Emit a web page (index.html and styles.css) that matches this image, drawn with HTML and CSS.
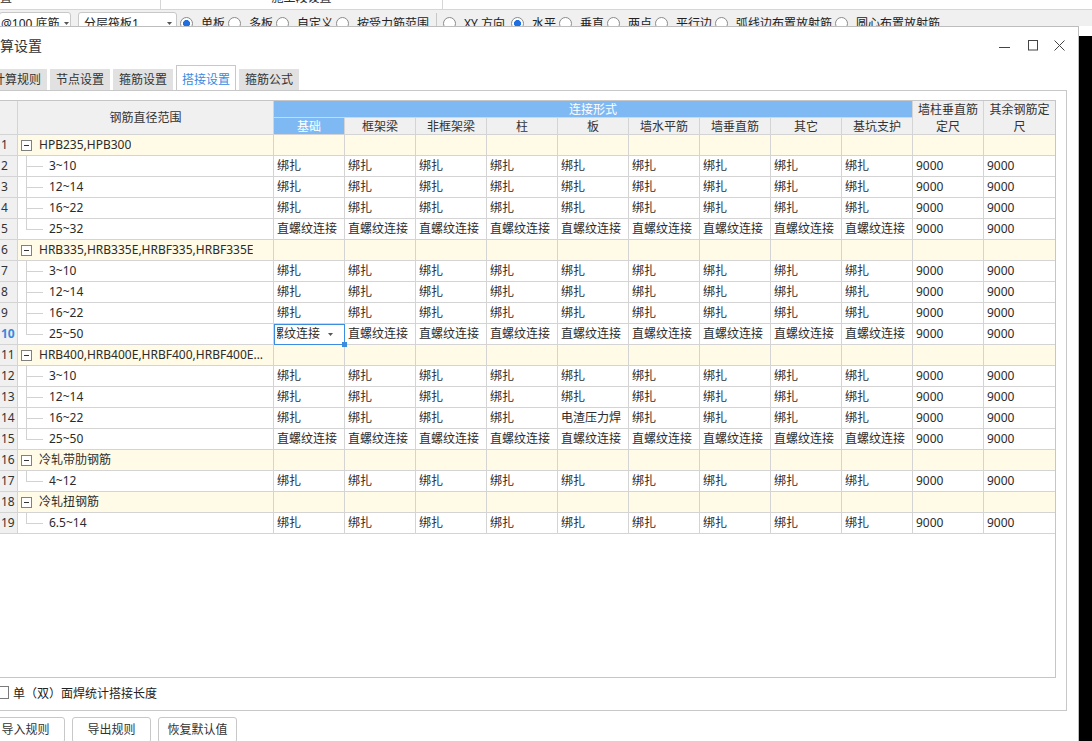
FILE: index.html
```html
<!DOCTYPE html>
<html lang="zh-CN">
<head>
<meta charset="utf-8">
<title>计算设置</title>
<link rel="stylesheet" href="styles.css">
</head>
<body>
<div class="topstrip">
  <div class="topcell tc1"><span class="cut">设置</span></div>
  <div class="topcell tc2"><span>施工段设置</span></div>
  <div class="topcell tc3"></div>
</div>
<div class="toolbar">
  <div class="tbrow">
    <div class="combo combo1"><span>@100 底筋</span><svg class="arr" width="5" height="3" viewBox="0 0 5 3"><path d="M0 0h5L2.5 3z" fill="#555"/></svg></div>
    <div class="combo combo2"><span>分层筏板1</span><svg class="arr" width="5" height="3" viewBox="0 0 5 3"><path d="M0 0h5L2.5 3z" fill="#555"/></svg></div>
    <span class="radio on first"></span><span class="lbl">单板</span>
    <span class="radio"></span><span class="lbl">多板</span>
    <span class="radio"></span><span class="lbl">自定义</span>
    <span class="radio"></span><span class="lbl">按受力筋范围</span>
    <span class="sep"></span>
    <span class="radio"></span><span class="lbl xy">XY 方向</span>
    <span class="radio on"></span><span class="lbl">水平</span>
    <span class="radio"></span><span class="lbl">垂直</span>
    <span class="radio"></span><span class="lbl">两点</span>
    <span class="radio"></span><span class="lbl">平行边</span>
    <span class="radio"></span><span class="lbl">弧线边布置放射筋</span>
    <span class="radio"></span><span class="lbl">圆心布置放射筋</span>
  </div>
</div>
<div class="desk">
  <div class="dialog">
    <div class="titlebar">
      <span class="title">计算设置</span>
      <div class="winctl">
        <svg class="wmin" width="11" height="11" viewBox="0 0 11 11"><path d="M0 7.5h11" stroke="#444" stroke-width="1"/></svg>
        <svg class="wmax" width="10" height="11" viewBox="0 0 10 11"><rect x="0.5" y="0.5" width="9" height="9.5" fill="none" stroke="#444"/></svg>
        <svg class="wclose" width="11" height="11" viewBox="0 0 11 11"><path d="M0.5 0.5l10 10M10.5 0.5l-10 10" stroke="#444" stroke-width="1"/></svg>
      </div>
    </div>
    <div class="tabs">
      <div class="tab">计算规则</div>
      <div class="tab">节点设置</div>
      <div class="tab">箍筋设置</div>
      <div class="tab active">搭接设置</div>
      <div class="tab">箍筋公式</div>
    </div>
    <div class="panel">
      <div class="grid">
        <div class="thead">
          <div class="h-rn"></div>
          <div class="h-range">钢筋直径范围</div>
          <div class="h-band">连接形式</div>
          <div class="h-tall">墙柱垂直筋定尺</div>
          <div class="h-tall last">其余钢筋定尺</div>
          <div class="h-sub on">基础</div>
          <div class="h-sub">框架梁</div>
          <div class="h-sub">非框架梁</div>
          <div class="h-sub">柱</div>
          <div class="h-sub">板</div>
          <div class="h-sub">墙水平筋</div>
          <div class="h-sub">墙垂直筋</div>
          <div class="h-sub">其它</div>
          <div class="h-sub">基坑支护</div>
        </div>

        <div class="row grp"><div class="rn">1</div><div class="gname"><span class="tog"></span><span class="gtext">HPB235,HPB300</span></div><div></div><div></div><div></div><div></div><div></div><div></div><div></div><div></div><div></div><div></div><div></div></div>
        <div class="row"><div class="rn">2</div><div class="ch">3~10</div><div>绑扎</div><div>绑扎</div><div>绑扎</div><div>绑扎</div><div>绑扎</div><div>绑扎</div><div>绑扎</div><div>绑扎</div><div>绑扎</div><div>9000</div><div>9000</div></div>
        <div class="row"><div class="rn">3</div><div class="ch">12~14</div><div>绑扎</div><div>绑扎</div><div>绑扎</div><div>绑扎</div><div>绑扎</div><div>绑扎</div><div>绑扎</div><div>绑扎</div><div>绑扎</div><div>9000</div><div>9000</div></div>
        <div class="row"><div class="rn">4</div><div class="ch">16~22</div><div>绑扎</div><div>绑扎</div><div>绑扎</div><div>绑扎</div><div>绑扎</div><div>绑扎</div><div>绑扎</div><div>绑扎</div><div>绑扎</div><div>9000</div><div>9000</div></div>
        <div class="row"><div class="rn">5</div><div class="ch end">25~32</div><div>直螺纹连接</div><div>直螺纹连接</div><div>直螺纹连接</div><div>直螺纹连接</div><div>直螺纹连接</div><div>直螺纹连接</div><div>直螺纹连接</div><div>直螺纹连接</div><div>直螺纹连接</div><div>9000</div><div>9000</div></div>

        <div class="row grp"><div class="rn">6</div><div class="gname"><span class="tog"></span><span class="gtext">HRB335,HRB335E,HRBF335,HRBF335E</span></div><div></div><div></div><div></div><div></div><div></div><div></div><div></div><div></div><div></div><div></div><div></div></div>
        <div class="row"><div class="rn">7</div><div class="ch">3~10</div><div>绑扎</div><div>绑扎</div><div>绑扎</div><div>绑扎</div><div>绑扎</div><div>绑扎</div><div>绑扎</div><div>绑扎</div><div>绑扎</div><div>9000</div><div>9000</div></div>
        <div class="row"><div class="rn">8</div><div class="ch">12~14</div><div>绑扎</div><div>绑扎</div><div>绑扎</div><div>绑扎</div><div>绑扎</div><div>绑扎</div><div>绑扎</div><div>绑扎</div><div>绑扎</div><div>9000</div><div>9000</div></div>
        <div class="row"><div class="rn">9</div><div class="ch">16~22</div><div>绑扎</div><div>绑扎</div><div>绑扎</div><div>绑扎</div><div>绑扎</div><div>绑扎</div><div>绑扎</div><div>绑扎</div><div>绑扎</div><div>9000</div><div>9000</div></div>
        <div class="row"><div class="rn cur">10</div><div class="ch end">25~50</div><div class="sel"><span class="ed"><span>直螺纹连接</span></span><svg class="ddarr" width="5" height="3" viewBox="0 0 5 3"><path d="M0 0h5L2.5 3z" fill="#555"/></svg></div><div>直螺纹连接</div><div>直螺纹连接</div><div>直螺纹连接</div><div>直螺纹连接</div><div>直螺纹连接</div><div>直螺纹连接</div><div>直螺纹连接</div><div>直螺纹连接</div><div>9000</div><div>9000</div></div>

        <div class="row grp"><div class="rn">11</div><div class="gname"><span class="tog"></span><span class="gtext narrow">HRB400,HRB400E,HRBF400,HRBF400E,RRB400</span></div><div></div><div></div><div></div><div></div><div></div><div></div><div></div><div></div><div></div><div></div><div></div></div>
        <div class="row"><div class="rn">12</div><div class="ch">3~10</div><div>绑扎</div><div>绑扎</div><div>绑扎</div><div>绑扎</div><div>绑扎</div><div>绑扎</div><div>绑扎</div><div>绑扎</div><div>绑扎</div><div>9000</div><div>9000</div></div>
        <div class="row"><div class="rn">13</div><div class="ch">12~14</div><div>绑扎</div><div>绑扎</div><div>绑扎</div><div>绑扎</div><div>绑扎</div><div>绑扎</div><div>绑扎</div><div>绑扎</div><div>绑扎</div><div>9000</div><div>9000</div></div>
        <div class="row"><div class="rn">14</div><div class="ch">16~22</div><div>绑扎</div><div>绑扎</div><div>绑扎</div><div>绑扎</div><div>电渣压力焊</div><div>绑扎</div><div>绑扎</div><div>绑扎</div><div>绑扎</div><div>9000</div><div>9000</div></div>
        <div class="row"><div class="rn">15</div><div class="ch end">25~50</div><div>直螺纹连接</div><div>直螺纹连接</div><div>直螺纹连接</div><div>直螺纹连接</div><div>直螺纹连接</div><div>直螺纹连接</div><div>直螺纹连接</div><div>直螺纹连接</div><div>直螺纹连接</div><div>9000</div><div>9000</div></div>

        <div class="row grp"><div class="rn">16</div><div class="gname"><span class="tog"></span><span class="gtext">冷轧带肋钢筋</span></div><div></div><div></div><div></div><div></div><div></div><div></div><div></div><div></div><div></div><div></div><div></div></div>
        <div class="row"><div class="rn">17</div><div class="ch end">4~12</div><div>绑扎</div><div>绑扎</div><div>绑扎</div><div>绑扎</div><div>绑扎</div><div>绑扎</div><div>绑扎</div><div>绑扎</div><div>绑扎</div><div>9000</div><div>9000</div></div>

        <div class="row grp"><div class="rn">18</div><div class="gname"><span class="tog"></span><span class="gtext">冷轧扭钢筋</span></div><div></div><div></div><div></div><div></div><div></div><div></div><div></div><div></div><div></div><div></div><div></div></div>
        <div class="row"><div class="rn">19</div><div class="ch end">6.5~14</div><div>绑扎</div><div>绑扎</div><div>绑扎</div><div>绑扎</div><div>绑扎</div><div>绑扎</div><div>绑扎</div><div>绑扎</div><div>绑扎</div><div>9000</div><div>9000</div></div>
      </div>
      <div class="chkrow"><span class="chk"></span><span>单（双）面焊统计搭接长度</span></div>
    </div>
    <div class="footer">
      <div class="btn">导入规则</div>
      <div class="btn">导出规则</div>
      <div class="btn">恢复默认值</div>
    </div>
  </div>
  <div class="side"></div>
</div>
</body>
</html>
```
FILE: styles.css
```css
* { box-sizing: border-box; }
html, body { margin: 0; padding: 0; }
body {
  width: 1092px;
  height: 741px;
  overflow: hidden;
  background: #fff;
  font-family: "Noto Sans", "Noto Sans CJK SC", sans-serif;
  font-size: 12px;
  color: #2b2b2b;
}

/* top strip behind the dialog */
.topstrip {
  height: 10px;
  border-bottom: 1px solid #d6d6d6;
  display: flex;
  overflow: hidden;
  background: #fff;
}
.topcell { height: 100%; display: flex; white-space: nowrap; }
.topcell span { margin-top: -8px; line-height: 12px; }
.tc1 { width: 161px; border-right: 1px solid #d6d6d6; }
.tc1 .cut { margin-left: -12px; }
.tc2 { width: 282px; border-right: 1px solid #d6d6d6; justify-content: center; }
.tc3 { flex: 1; }

/* toolbar */
.toolbar { height: 16px; overflow: hidden; background: #f0f0f0; }
.tbrow { height: 26px; display: flex; align-items: center; white-space: nowrap; color: #222; }
.combo {
  height: 22px;
  border: 1px solid #c8c8c8;
  border-radius: 3px;
  background: #fff;
  display: flex;
  align-items: center;
  flex: none;
}
.combo .arr { margin-left: auto; }
.combo1 { width: 72px; margin-left: -1px; padding: 0 1px 0 1px; }
.combo2 { width: 99px; margin-left: 7px; padding: 0 4px 0 5px; }
.radio {
  width: 13px;
  height: 13px;
  flex: none;
  border-radius: 50%;
  border: 1px solid #8a8a8a;
  background: #fff;
  margin-right: 8px;
}
.radio.first { margin-left: 3px; }
.radio.on { background: radial-gradient(circle, #1f6fe0 0 3.2px, #fff 3.8px); }
.lbl { margin-right: 3px; }
.lbl.xy { margin-right: 6px; }
.sep { width: 1px; height: 20px; background: #c8c8c8; margin: 0 6px 0 4px; flex: none; }

/* desk */
.desk { display: flex; }
.dialog {
  width: 1094px;
  flex: none;
  margin-left: -15px;
  border: 1px solid #bdbdbd;
  border-bottom: none;
  background: #fff;
}
.side { flex: 1; background: linear-gradient(#fff 10px, #000 10px); }

.titlebar { height: 36px; display: flex; align-items: center; padding-right: 13px; }
.title { font-size: 14px; color: #333; }
.winctl { margin-left: auto; display: flex; align-items: center; }
.winctl svg { display: block; }
.wmin { margin-right: 18px; }
.wmax { margin-right: 16px; }

.tabs { height: 27px; display: flex; align-items: flex-end; padding-left: 1px; }
.tab {
  height: 21px;
  line-height: 21px;
  padding: 0 6px;
  background: #e1e1e1;
  margin-right: 3px;
  color: #333;
  white-space: nowrap;
}
.tab.active {
  height: 25px;
  padding: 3px 5px 0;
  background: #fff;
  border: 1px solid #c8c8c8;
  border-bottom: none;
  color: #3b8ae0;
}

.panel {
  margin-right: 11px;
  border: 1px solid #c8c8c8;
  padding: 9px 0 3px 0;
}

.grid {
  width: 1057px;
  height: 578px;
  margin-left: 12px;
  border: 1px solid #c6c6c6;
  background: #fff;
}
.thead {
  display: grid;
  grid-template-columns: 18px 256px repeat(11, 71px);
  grid-template-rows: 17px 17px;
}
.thead > div {
  border-right: 1px solid #d4d4d4;
  border-bottom: 1px solid #d4d4d4;
  background: #f0f0f0;
  color: #333;
  display: flex;
  align-items: center;
  justify-content: center;
  text-align: center;
  line-height: 17px;
}
.thead > .h-rn, .thead > .h-range { grid-row: span 2; }
.thead > .h-band {
  grid-column: span 9;
  background: #7fb9f4;
  color: #fff;
  border-bottom-color: #c3dcf5;
}
.thead > .h-tall { grid-row: span 2; }
.thead > .h-tall.last { border-right: none; }
.thead > .h-sub.on { background: #7fb9f4; color: #fff; }

.row {
  display: grid;
  grid-template-columns: 18px 256px repeat(11, 71px);
  height: 21px;
}
.row > div {
  border-right: 1px solid #d4d4d4;
  border-bottom: 1px solid #d4d4d4;
  padding-left: 3px;
  line-height: 20px;
  white-space: nowrap;
  overflow: hidden;
}
.row > div:last-child { border-right: none; }
.row > .rn { background: #f0f0f0; padding-left: 1px; color: #333; }
.row > .rn.cur { color: #3a89de; font-weight: bold; }
.grp > div { background: #fffbe6; }

.row > .gname { display: flex; align-items: center; padding-left: 3px; padding-right: 4px; }
.tog {
  width: 11px;
  height: 11px;
  flex: none;
  border: 1px solid #808080;
  background: #fff;
  display: flex;
  align-items: center;
  justify-content: center;
}
.tog::before { content: ""; width: 5px; height: 1px; background: #333; }
.gtext { margin-left: 7px; overflow: hidden; text-overflow: ellipsis; min-width: 0; }
.gtext.narrow { margin-right: 3px; }

.row > .ch {
  padding-left: 31px;
  background:
    linear-gradient(#d2d2d2, #d2d2d2) 8px 0 / 1px 100% no-repeat,
    linear-gradient(#d2d2d2, #d2d2d2) 8px 10px / 17px 1px no-repeat;
}
.row > .ch.end {
  background:
    linear-gradient(#d2d2d2, #d2d2d2) 8px 0 / 1px 11px no-repeat,
    linear-gradient(#d2d2d2, #d2d2d2) 8px 10px / 17px 1px no-repeat;
}

.row > .sel {
  position: relative;
  overflow: visible;
  display: flex;
  align-items: center;
  outline: 1px solid #3c8ce0;
  outline-offset: -1px;
}
.row > .sel::after {
  content: "";
  position: absolute;
  right: -3px;
  bottom: -3px;
  width: 5px;
  height: 5px;
  background: #3c8ce0;
}
.ed { width: 48px; overflow: hidden; white-space: nowrap; flex: none; }
.ed span { margin-left: -17px; }
.ddarr { margin-left: 3px; flex: none; display: block; }

.chkrow { height: 29px; display: flex; align-items: center; padding-left: 9px; color: #222; }
.chk { width: 13px; height: 13px; border: 1px solid #7a7a7a; background: #fff; margin-right: 4px; flex: none; }

.footer { padding-top: 6px; display: flex; gap: 7px; }
.btn {
  width: 79px;
  height: 26px;
  border: 1px solid #c8c8c8;
  border-radius: 3px;
  background: #fff;
  text-align: center;
  line-height: 24px;
  color: #333;
  flex: none;
}
```
